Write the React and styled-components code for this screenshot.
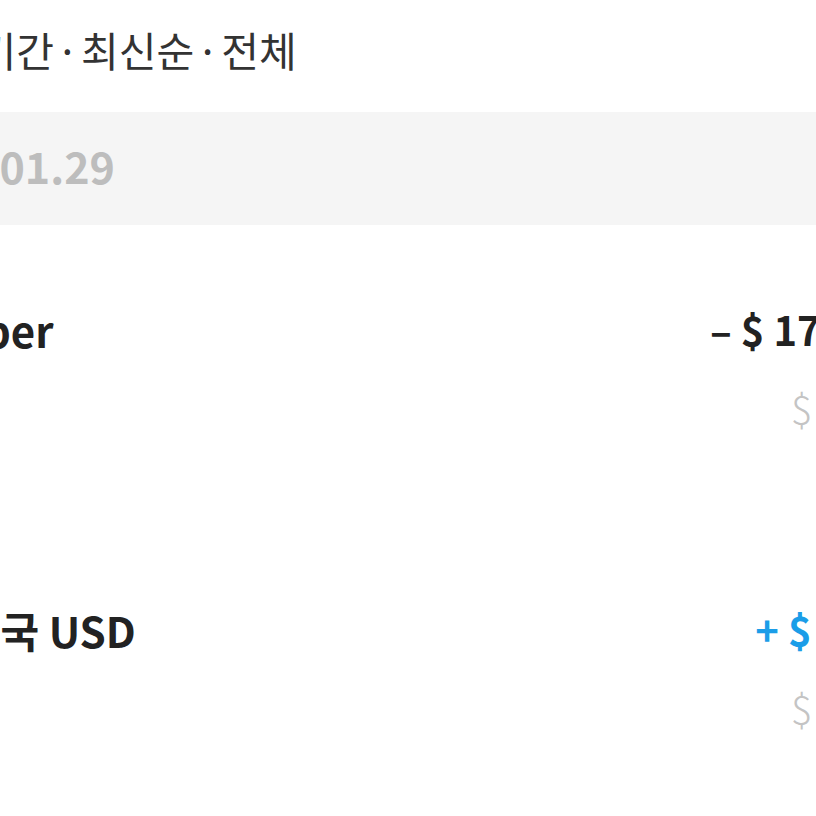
import React from 'react';
import styled, { createGlobalStyle } from 'styled-components';

const GlobalStyle = createGlobalStyle`
  html, body {
    margin: 0;
    padding: 0;
    background: #ffffff;
    overflow: hidden;
  }
  body {
    font-family: "Noto Sans CJK KR", "Noto Sans", sans-serif;
  }
`;

const Viewport = styled.div`
  width: 816px;
  height: 816px;
  overflow: hidden;
`;

// the phone screen is wider than the crop, so it sits shifted to the left
const Screen = styled.div`
  width: 1053px;
  margin-left: -125px;
`;

const FilterBar = styled.div`
  height: 112px;
  display: flex;
  align-items: center;
  padding: 0 0 14px 19px;
  box-sizing: border-box;
  font-size: 41px;
  color: #333333;
`;

const Dot = styled.span`
  margin: 0 2px;
`;

const DateBand = styled.div`
  height: 113px;
  background: #f5f5f5;
  display: flex;
  align-items: center;
  padding: 0 0 8px 9px;
  box-sizing: border-box;
  font-size: 43px;
  font-weight: 700;
  color: #bdbdbd;
`;

const Row = styled.div`
  height: 300px;
  padding: 77px 0 0;
  box-sizing: border-box;
  display: flex;
  flex-direction: column;
  gap: 24px;
`;

const Line = styled.div`
  height: 54px;
  display: flex;
  align-items: center;
  justify-content: ${p => (p.$end ? 'flex-end' : 'space-between')};
`;

const Title = styled.div`
  font-size: 42px;
  font-weight: 700;
  color: #222222;
`;

const Amount = styled.div`
  font-size: 40px;
  font-weight: 700;
  color: ${p => (p.$plus ? '#1b9de8' : '#222222')};
`;

const Balance = styled.div`
  font-size: 40px;
  font-weight: 300;
  color: #c4c4c4;
  margin-right: -10px;
`;

const items = [
  { title: '우버Uber', amount: '– $ 1750.00', plus: false, balance: '$ 230.50' },
  { title: '환전 미국 USD', amount: '+ $ 20.00', plus: true, balance: '$ 250.50' },
];

export default function App() {
  return (
    <Viewport>
      <GlobalStyle />
      <Screen>
        <FilterBar>
          전체 기간<Dot>·</Dot>최신순<Dot>·</Dot>전체
        </FilterBar>
        <DateBand>2024.01.29</DateBand>
        {items.map(it => (
          <Row key={it.title}>
            <Line>
              <Title>{it.title}</Title>
              <Amount $plus={it.plus}>{it.amount}</Amount>
            </Line>
            <Line $end>
              <Balance>{it.balance}</Balance>
            </Line>
          </Row>
        ))}
      </Screen>
    </Viewport>
  );
}
